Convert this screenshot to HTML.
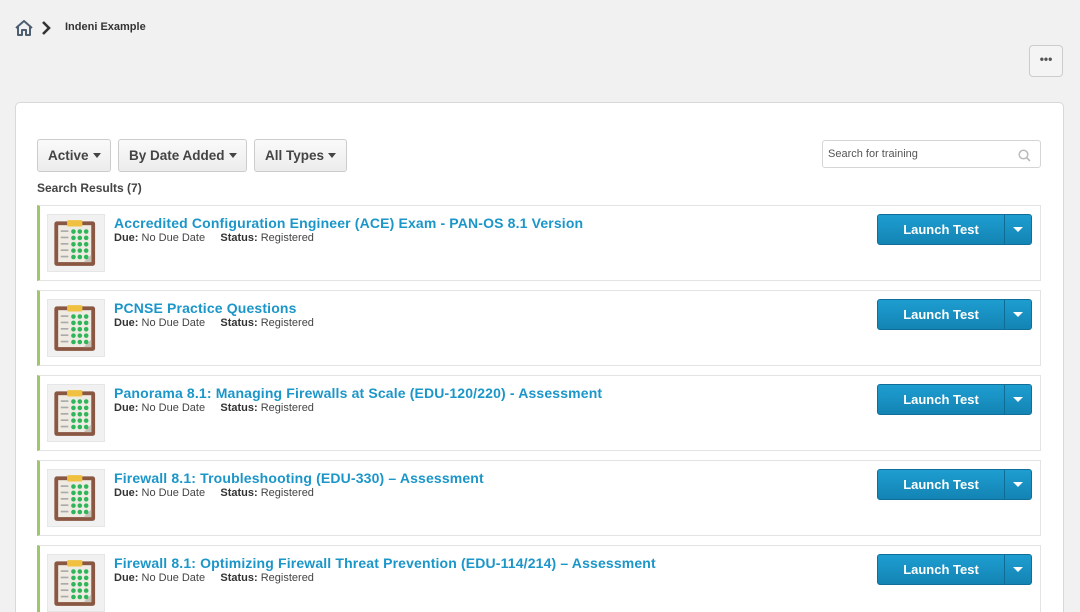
<!DOCTYPE html>
<html><head><meta charset="utf-8"><style>
*{box-sizing:border-box;margin:0;padding:0}
html{width:1080px;height:612px;overflow:hidden}
body{width:1080px;height:612px;overflow:hidden;background:#f1f1f1;font-family:"Liberation Sans",Arial,sans-serif;position:relative;color:#333}
.abs{position:absolute}
.crumb{left:65px;top:21px;font-size:11px;font-weight:bold;color:#333}
.more{left:1029px;top:45px;width:34px;height:32px;border:1px solid #ccc;border-radius:4px;background:#f4f4f4;text-align:center;font-weight:bold;font-size:12px;line-height:26px;color:#555}
.card{left:15px;top:102px;width:1049px;height:520px;background:#fff;border:1px solid #d8d8d8;border-radius:5px}
.dd{top:139px;height:33px;border:1px solid #ccc;border-radius:3px;background:linear-gradient(#fafafa,#ececec);font-size:13.5px;font-weight:bold;color:#444;line-height:31px;padding-left:10px}
.dd:after{content:"";display:inline-block;margin-left:4px;vertical-align:2px;border-left:4px solid transparent;border-right:4px solid transparent;border-top:5px solid #444}
.search{left:822px;top:140px;width:219px;height:28px;border:1px solid #d5d5d5;border-radius:3px;font-size:11px;color:#555;line-height:26px;padding-left:5px}
.res{left:37px;top:181px;font-size:12px;font-weight:bold;color:#444}
.row{left:37px;width:1004px;height:76px;border:1px solid #e3e3e3;border-left:3px solid #9ec66a;background:#fff}
.ic{position:absolute;left:7px;top:8px;width:58px;height:58px;background:#f1f1f1;border:1px solid #e6e6e6}
.t{position:absolute;left:74px;top:9px;font-size:14px;letter-spacing:0.15px;font-weight:bold;color:#1b96c9;white-space:nowrap}
.m{position:absolute;left:74px;top:26px;font-size:11px;color:#444;white-space:nowrap}
.m b{color:#333}
.btn{position:absolute;left:837px;top:8px;width:155px;height:31px;border-radius:3px;background:linear-gradient(#1e9dd0,#1384b4);border:1px solid #0f6f99;color:#fff;font-size:13px;font-weight:bold}
.btn span{position:absolute;left:0;width:126px;text-align:center;line-height:29px}
.btn i{position:absolute;left:126px;top:0;width:1px;height:29px;background:#0e6d95}
.btn em{position:absolute;left:135px;top:12px;border-left:5px solid transparent;border-right:5px solid transparent;border-top:5px solid #fff}
</style></head><body>
<svg class="abs" style="left:14px;top:19px" width="20" height="18" viewBox="0 0 20 18"><path d="M2 9 L10 2 L18 9 M4 7.5 V16 H8 V11 H12 V16 H16 V7.5" fill="none" stroke="#4d5e70" stroke-width="2" stroke-linejoin="round"/></svg>
<svg class="abs" style="left:41px;top:20px" width="12" height="16" viewBox="0 0 12 16"><path d="M2 2 L8 8 L2 14" fill="none" stroke="#333" stroke-width="2.6"/></svg>
<div class="abs crumb">Indeni Example</div>
<div class="abs more">•••</div>
<div class="abs card"></div>
<div class="abs dd" style="left:37px;width:74px">Active</div>
<div class="abs dd" style="left:118px;width:129px">By Date Added</div>
<div class="abs dd" style="left:254px;width:93px">All Types</div>
<div class="abs search">Search for training
<svg style="position:absolute;right:9px;top:8px" width="13" height="13" viewBox="0 0 13 13"><circle cx="5.5" cy="5.5" r="4.3" fill="none" stroke="#bbb" stroke-width="1.5"/><path d="M8.5 8.5 L12 12" stroke="#bbb" stroke-width="1.6"/></svg></div>
<div class="abs res">Search Results (7)</div>

<div id="rows"></div>
<script>
var titles=["Accredited Configuration Engineer (ACE) Exam - PAN-OS 8.1 Version","PCNSE Practice Questions","Panorama 8.1: Managing Firewalls at Scale (EDU-120/220) - Assessment","Firewall 8.1: Troubleshooting (EDU-330) – Assessment","Firewall 8.1: Optimizing Firewall Threat Prevention (EDU-114/214) – Assessment"];
var h="";
var dots="";
for(var r=0;r<5;r++)for(var c=0;c<3;c++)dots+='<circle cx="'+(20+c*5)+'" cy="'+(13+r*5)+'" r="1.8" fill="#2fb55a"/>';
var lines="";for(var r=0;r<5;r++)lines+='<rect x="10" y="'+(12+r*5)+'" width="6" height="1.3" fill="#aaa"/>';
titles.forEach(function(t,i){
h+='<div class="abs row" style="top:'+(205+85*i)+'px"><div class="ic"><svg width="56" height="56" viewBox="0 0 44 44" style="position:absolute;left:0;top:0"><rect x="5" y="5" width="32" height="35" rx="2" fill="#8a5743"/><rect x="8" y="8" width="26" height="29" fill="#efebe3"/><path d="M28 37 L34 31 L34 37Z" fill="#c9c4ba"/><rect x="15" y="4" width="12" height="5" rx="1" fill="#f0c040"/>'+lines+dots+'</svg></div><div class="t">'+t+'</div><div class="m"><b>Due:</b> No Due Date &nbsp;&nbsp;&nbsp; <b>Status:</b> Registered</div><div class="btn"><span>Launch Test</span><i></i><em></em></div></div>';
});
document.getElementById("rows").innerHTML=h;
</script>
</body></html>
